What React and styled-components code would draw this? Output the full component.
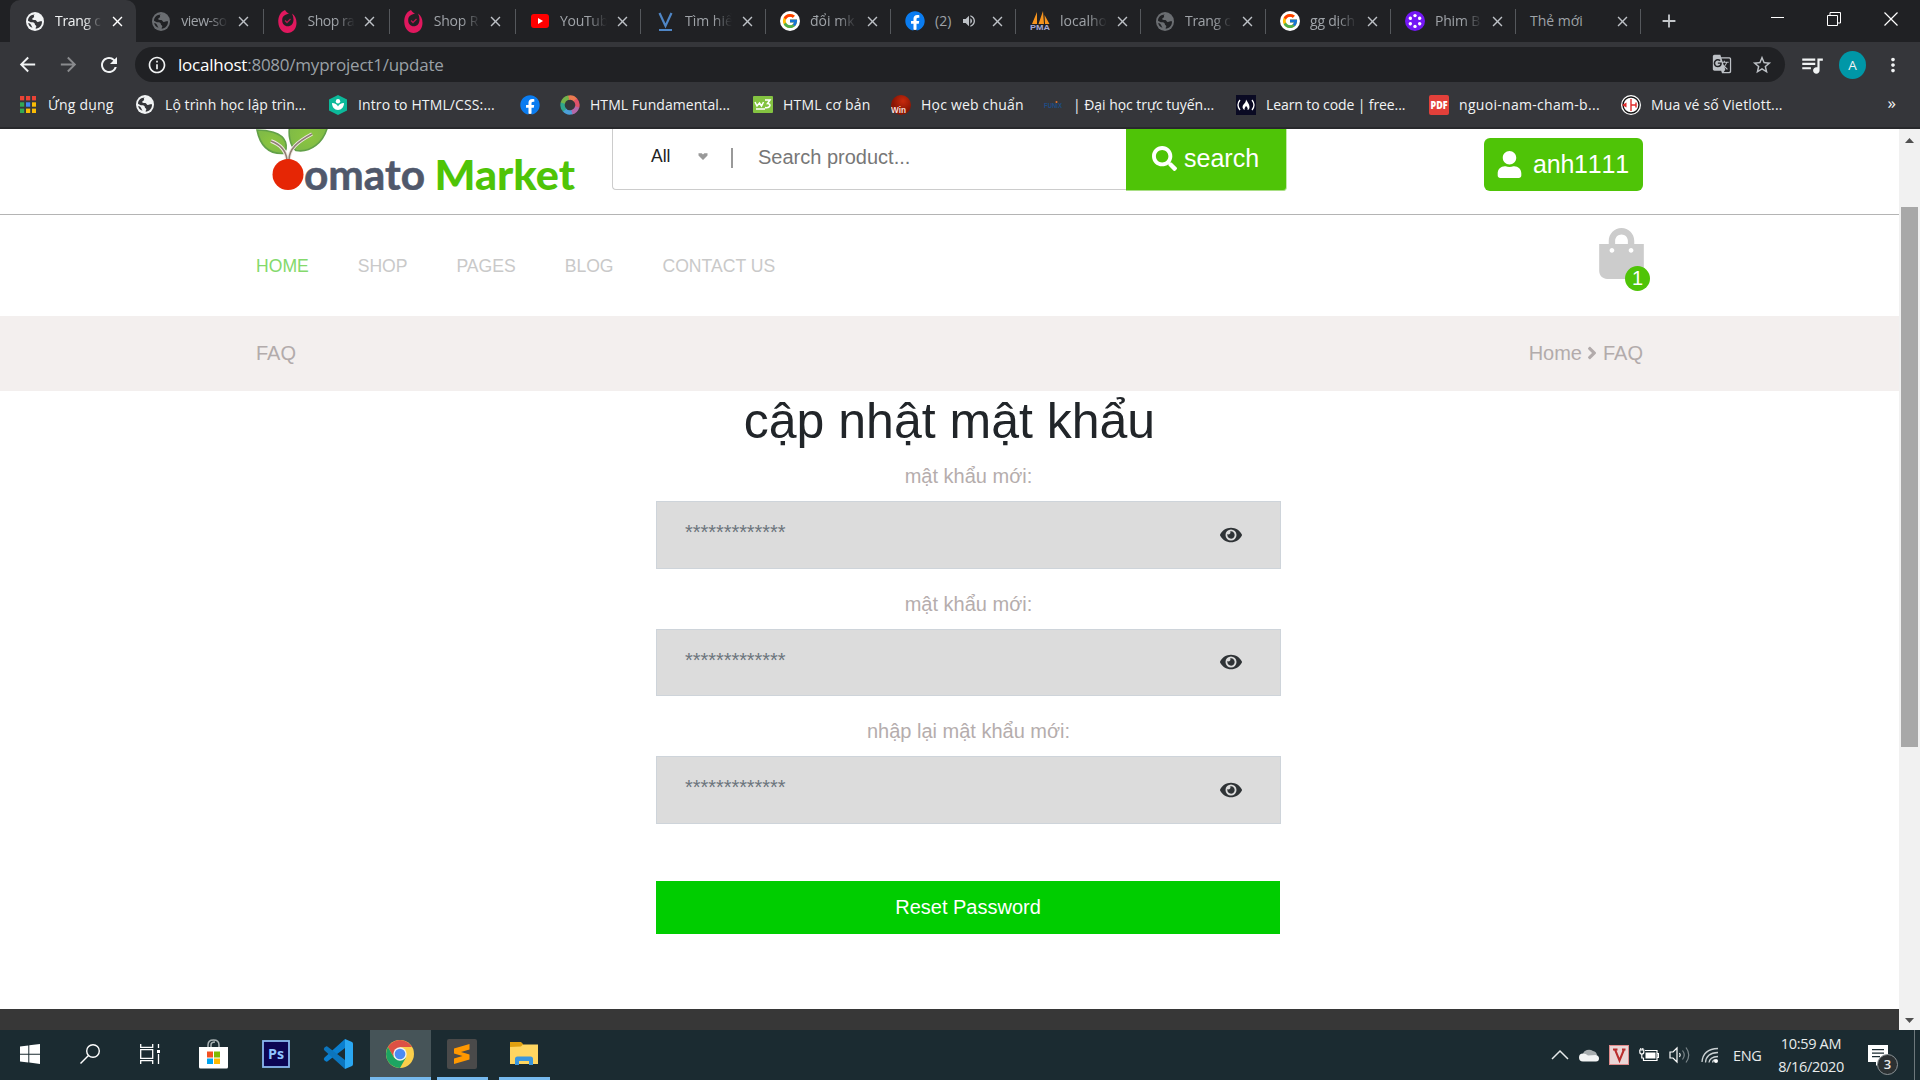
import React from "react";
import styled, { createGlobalStyle, css } from "styled-components";
import { FaEye, FaSearch, FaUser, FaShoppingBag, FaAngleRight, FaFacebook } from "react-icons/fa";
import { FcGoogle } from "react-icons/fc";
import {
  MdArrowBack, MdArrowForward, MdRefresh, MdInfoOutline, MdMoreVert,
  MdClose, MdAdd, MdVolumeUp, MdStarBorder, MdQueueMusic, MdGTranslate,
} from "react-icons/md";

const GlobalStyle = createGlobalStyle`
  *, *::before, *::after { box-sizing: border-box; }
  body { margin: 0; background: #fff; overflow: hidden; }
  svg { display: block; flex: none; }
`;

const ui = `"Open Sans", "Noto Sans", sans-serif`;
const web = `"Liberation Sans", Arial, sans-serif`;
const green = "#4fc407";

/* ---------- window ---------- */
const Desktop = styled.div`
  width: 1920px;
  height: 1080px;
  display: grid;
  grid-template-rows: 42px 45px 42px 901px 50px;
  font-family: ${ui};
  overflow: hidden;
`;

const TabStrip = styled.div`
  display: flex;
  background: #202124;
  padding-left: 10px;
`;
const Tab = styled.div`
  width: ${(p) => p.$w}px;
  height: 42px;
  display: flex;
  align-items: center;
  padding-left: 15px;
  position: relative;
  font-size: 14px;
  color: ${(p) => (p.$active ? "#f1f3f4" : "#9fa3a8")};
  background: ${(p) => (p.$active ? "#35363a" : "transparent")};
  border-radius: 10px 10px 0 0;
  ${(p) =>
    p.$line &&
    css`
      &::after {
        content: "";
        position: absolute;
        right: -1px;
        top: 9px;
        width: 1px;
        height: 25px;
        background: #55585c;
      }
    `}
`;
const TabIcon = styled.span`
  width: 20px;
  margin-right: 10px;
  display: flex;
  justify-content: center;
`;
const TabTitle = styled.span`
  width: ${(p) => (p.$wide ? 77 : 47)}px;
  white-space: nowrap;
  line-height: 24px;
  letter-spacing: ${(p) => p.$ls || 0}px;
  mask-image: ${(p) => (p.$wide || p.$short ? "none" : "linear-gradient(90deg, #000 60%, transparent 100%)")};
`;
const Speaker = styled.span`
  position: absolute;
  left: 71px;
  top: 13px;
  color: #bdc1c6;
`;
const TabClose = styled.span`
  margin-left: 6.5px;
  color: ${(p) => (p.$active ? "#fff" : "#bdc1c6")};
`;
const NewTab = styled.div`
  margin-left: 18px;
  display: flex;
  align-items: center;
  color: #c4c7ca;
`;
const WindowButtons = styled.div`
  margin-left: auto;
  display: flex;
  align-items: flex-start;
  padding: 12px 22px 0 0;
  gap: 43px;
`;

const Toolbar = styled.div`
  background: #35363a;
  display: flex;
  align-items: center;
  padding: 0 16px 0 16px;
  color: #f1f3f4;
`;
const NavButtons = styled.div`
  display: flex;
  gap: 17.5px;
  width: 119px;
`;
const NavIcon = styled.span`
  opacity: ${(p) => (p.$dim ? 0.45 : 1)};
`;
const Omnibox = styled.div`
  width: 1650px;
  height: 35px;
  border-radius: 18px;
  background: #202124;
  display: flex;
  align-items: center;
  padding: 0 12px;
  font-size: 17px;
  line-height: 35px;
`;
const Url = styled.span`
  margin-left: 11px;
  flex: 1;
  letter-spacing: -0.23px;
  color: #9aa0a6;
  b { color: #fff; font-weight: 400; }
`;
const OmniIcons = styled.div`
  display: flex;
  gap: 19px;
  color: #bdc1c6;
`;
const Actions = styled.div`
  display: flex;
  align-items: center;
  margin-left: 14px;
  flex: 1;
`;
const Avatar = styled.span`
  width: 27px;
  height: 28px;
  margin-left: 14px;
  margin-right: auto;
  border-radius: 50%;
  background: #0097a7;
  font-size: 13.5px;
  line-height: 28px;
  text-align: center;
`;

const Bookmarks = styled.div`
  background: #35363a;
  border-bottom: 2px solid #28292c;
  display: flex;
  align-items: center;
  padding: 0 24px 5px 18px;
  color: #f1f3f4;
  font-size: 14px;
`;
const Bookmark = styled.div`
  display: flex;
  align-items: center;
  width: ${(p) => p.$w}px;
  flex: none;
`;
const BookmarkIcon = styled.span`
  width: 20px;
  display: flex;
  justify-content: center;
  margin-right: 10px;
`;
const BookmarkText = styled.span`
  white-space: nowrap;
  letter-spacing: ${(p) => p.$ls || 0}px;
`;
const More = styled.span`
  margin-left: auto;
  font-size: 17px;
  line-height: 18px;
  margin-top: -4px;
`;

/* ---------- web page ---------- */
const Viewport = styled.div`
  display: grid;
  grid-template-columns: 1899px 21px;
  font-family: ${web};
`;
const Page = styled.div`
  display: flex;
  flex-direction: column;
  background: #fff;
`;
const Header = styled.header`
  height: 86px;
  padding: 0 256px;
  border-bottom: 1px solid #b4b4b4;
  display: flex;
  align-items: flex-start;
  overflow: hidden;
`;
const LogoBox = styled.div`
  width: 356px;
  height: 61px;
`;
const SearchBox = styled.div`
  display: flex;
  width: 675px;
  height: 62px;
`;
const SearchFields = styled.div`
  display: flex;
  width: 514px;
  height: 61px;
  border: solid #ccc;
  border-width: 0 0 1px 1px;
  border-radius: 0 0 0 4px;
`;
const Category = styled.div`
  width: 120px;
  height: 54px;
  padding-left: 38px;
  display: flex;
  align-items: center;
  gap: 28px;
  font-size: 17.5px;
  color: #222;
`;
const Divider = styled.span`
  width: 2px;
  height: 20px;
  margin: 19px 0 0 -2px;
  background: #999;
`;
const SearchInput = styled.input`
  width: 380px;
  height: 60px;
  border: 0;
  outline: 0;
  background: transparent;
  padding: 0 0 3px 25px;
  font: 20px ${web};
  &::placeholder { color: #777; opacity: 1; }
`;
const SearchButton = styled.button`
  flex: 1;
  height: 62px;
  border: 0;
  border-right: 1px solid #c3e8ab;
  border-bottom: 1px solid #a9df85;
  border-radius: 0 0 4px 0;
  background: ${green};
  color: #fff;
  font: 25px ${web};
  display: flex;
  align-items: center;
  gap: 7px;
  padding: 0 0 3px 26px;
`;
const UserButton = styled.button`
  margin: 9px 0 0 auto;
  width: 159px;
  height: 53px;
  border: 0;
  border-radius: 6px;
  background: ${green};
  color: #fff;
  font: 25px ${web};
  font-kerning: none;
  letter-spacing: -0.2px;
  display: flex;
  align-items: center;
  gap: 10px;
  padding: 0 0 0 12px;
`;
const MenuBar = styled.nav`
  height: 101px;
  padding: 2px 249px 0 256px;
  display: flex;
  align-items: center;
  gap: 48.9px;
  font-size: 17.6px;
`;
const MenuLink = styled.a`
  color: ${(p) => (p.$active ? "#84d96c" : "#c9c9c9")};
`;
const Cart = styled.div`
  position: relative;
  margin-left: auto;
  align-self: flex-start;
  width: 54px;
  height: 76px;
  padding-top: 11px;
  color: #ccc;
`;
const CartCount = styled.span`
  position: absolute;
  right: 0;
  top: 49px;
  width: 25px;
  height: 25px;
  border-radius: 50%;
  background: ${green};
  color: #fff;
  font-size: 20px;
  line-height: 25px;
  text-align: center;
`;
const Breadcrumb = styled.div`
  height: 75px;
  background: #f3efee;
  padding: 0 256px 1px 256px;
  display: flex;
  align-items: center;
  justify-content: space-between;
  font-size: 20px;
  color: #b2abab;
`;
const Trail = styled.div`
  display: flex;
  align-items: center;
  gap: 5.5px;
`;
const TrailArrow = styled(FaAngleRight)`
  width: 10px;
`;
const Heading = styled.h1`
  margin: 0 0 10px;
  font-size: 50px;
  font-weight: 400;
  line-height: 60px;
  text-align: center;
  color: #212529;
`;
const Form = styled.form`
  width: 625px;
  margin-left: 656px;
  flex: 1;
`;
const Field = styled.div`
  margin-bottom: 20px;
`;
const Label = styled.label`
  display: block;
  margin-bottom: 10px;
  font-size: 20px;
  line-height: 30px;
  text-align: center;
  color: #b5adad;
`;
const InputFrame = styled.div`
  height: 67.5px;
  border: 1px solid #ced4da;
  background: #dcdcdc;
  display: flex;
  align-items: center;
  padding: 0 38px 0 28px;
  color: #2f3336;
`;
const PasswordInput = styled.input`
  flex: 1;
  border: 0;
  outline: 0;
  padding: 0;
  margin-bottom: 4px;
  background: transparent;
  font: 20px ${web};
  letter-spacing: -0.05px;
  &::placeholder { color: #6c757d; opacity: 1; }
`;
const Submit = styled.button`
  display: block;
  width: 624px;
  height: 53px;
  margin-top: 57px;
  border: 0;
  background: #00cd00;
  color: #fff;
  font: 20px ${web};
`;
const Footer = styled.footer`
  height: 21px;
  background: #373737;
`;
const Scrollbar = styled.div`
  background: #f1f1f1;
  display: flex;
  flex-direction: column;
  align-items: center;
  padding: 9px 0 7px;
`;
const Thumb = styled.div`
  width: 17px;
  height: 540px;
  margin: 64px 0 auto;
  background: #a8a8a8;
`;

/* ---------- taskbar ---------- */
const Taskbar = styled.div`
  display: flex;
  background: #1b2b31;
  color: #e8ebec;
`;
const TaskButton = styled.div`
  width: ${(p) => p.$w}px;
  margin-right: ${(p) => p.$mr || 0}px;
  height: 50px;
  display: flex;
  align-items: center;
  justify-content: center;
  padding: ${(p) => (p.$open ? "1px 2px 0 0" : "1px 0 0")};
  background: ${(p) => (p.$active ? "#465458" : "transparent")};
  border-bottom: 3px solid ${(p) => (p.$open ? "#76b9ed" : "transparent")};
`;
const Tray = styled.div`
  margin-left: auto;
  display: flex;
  align-items: center;
  padding-right: 5px;
`;
const TrayIcons = styled.div`
  display: flex;
  align-items: center;
  gap: 10px;
`;
const Lang = styled.span`
  font-size: 14.5px;
  margin-left: 14px;
  width: 43px;
  letter-spacing: -0.3px;
`;
const Clock = styled.div`
  width: 70px;
  padding-bottom: 1px;
  font-size: 14.5px;
  line-height: 23px;
  text-align: center;
  white-space: nowrap;
  letter-spacing: -0.33px;
`;
const Notices = styled.div`
  position: relative;
  width: 32px;
  height: 50px;
  margin-left: 22px;
  padding-top: 15px;
`;
const NoticeCount = styled.span`
  position: absolute;
  left: 9px;
  top: 24px;
  width: 21px;
  height: 21px;
  border-radius: 50%;
  border: 1px solid #8c9396;
  background: #2b3032;
  font-size: 13px;
  font-weight: 600;
  line-height: 19px;
  text-align: center;
`;
const Peek = styled.span`
  width: 1px;
  height: 50px;
  margin-left: 14px;
  background: #6d777b;
`;

/* ---------- drawings ---------- */
const Globe = ({ color = "#f1f3f4", sea = "#35363a" }) => (
  <svg width="18" height="19" viewBox="0 0 18 19">
    <ellipse cx="9" cy="9.500" rx="9" ry="9.400" fill={color} />
    <path d="M9 2.500c-1 .3-1.400 1-1 1.800.5.900-.3 1.300-1 1.600-.8.400-1 1-.6 1.600.6.700 2 .2 3 .6 1.300.5 1 1.600 2.200 1.800 1.500.2 2.300-.9 4.400-.6.300 4.200-3 7.300-6.200 7.500-.6-1 .6-1.400.5-2.500-.1-1-1.500-1-1.500-2.200 0-1.500-1.300-1.700-2.800-1.800-1.600 0-2.900-.6-4-1.500C2 5.200 5.200 2.300 9 2.500z" fill={sea} />
    <path d="M2.200 11c1.500.4 2.600 1 3 2.200.3 1 .8 1.500 1.300 2.500C4 15 2.500 13.200 2.200 11z" fill={sea} />
  </svg>
);
const Swirl = () => (
  <svg width="19" height="23" viewBox="0 0 19 23">
    <path d="M7 0C2 2 0 7 .3 12.500.7 18.500 4.500 23 9.500 23c5.200 0 9-4.200 9-10 0-4-1.500-7.500-4.500-9.500 1 2 1.500 4 1.500 6 0 4-2.200 6.800-5.800 6.800-3.300 0-5.500-2.400-5.500-6C4.200 6 7 4.500 11 3.500 9.500 3 8 2 7 0z" fill="#e0185e" />
    <path d="M7 10.500l2 2 3.500-3.500" stroke="#b8164e" strokeWidth="1.300" fill="none" />
  </svg>
);
const YouTube = () => (
  <svg width="18" height="14" viewBox="0 0 18 14">
    <rect width="18" height="14" rx="3" fill="#f00" />
    <path d="M7 4l5 3-5 3z" fill="#fff" />
  </svg>
);
const VMark = () => (
  <svg width="15" height="19" viewBox="0 0 15 19">
    <path d="M1.500 1l6 13 6-13" stroke="#4f86c6" strokeWidth="2.200" fill="none" />
    <path d="M1 18h13" stroke="#4f86c6" strokeWidth="2" />
  </svg>
);
const GoogleMark = () => (
  <svg width="20" height="20" viewBox="0 0 20 20">
    <circle cx="10" cy="10" r="10" fill="#fff" />
    <g transform="translate(1.5 1.5)"><FcGoogle size={17} /></g>
  </svg>
);
const Facebook = () => (
  <svg width="20" height="20" viewBox="0 0 20 20">
    <circle cx="10" cy="10" r="9" fill="#fff" />
    <FaFacebook size={20} color="#0a7cf0" />
  </svg>
);
const Sails = () => (
  <svg width="20" height="20" viewBox="0 0 20 20">
    <path d="M7 1v12H2zM13 0L8.500 13H14zM14.500 4l5 9h-4.500z" fill="#f7941d" />
    <text x="0" y="19" fontSize="8" fontWeight="700" fill="#a6a9d4" fontFamily="Liberation Sans, sans-serif" textLength="20" lengthAdjust="spacingAndGlyphs">PMA</text>
  </svg>
);
const Dots = () => (
  <svg width="20" height="20" viewBox="0 0 20 20">
    <circle cx="10" cy="10" r="10" fill="#7417f5" />
    {[0, 60, 120, 180, 240, 300].map((a) => (
      <circle key={a} cx="10" cy="4.6" r="1.7" fill="#fff" transform={`rotate(${a} 10 10)`} />
    ))}
  </svg>
);
const AppsGrid = () => (
  <svg width="16" height="17" viewBox="0 0 16 17">
    {["#ea4335", "#ea4335", "#ea4335", "#34a853", "#4285f4", "#fbbc05", "#34a853", "#fbbc05", "#fbbc05"].map((c, i) => (
      <rect key={i} x={(i % 3) * 6} y={Math.floor(i / 3) * 6.3} width="4.200" height="4.400" fill={c} />
    ))}
  </svg>
);
const Sprout = () => (
  <svg width="18" height="20" viewBox="0 0 18 20">
    <path d="M9 0l9 4.500v11L9 20l-9-4.500v-11z" fill="#0cb99a" />
    <circle cx="9" cy="6.200" r="2.200" fill="#fff" />
    <path d="M3 8c3 0 5 1.500 6 3.500C10 9.500 12 8 15 8c0 4-2.500 7-6 7S3 12 3 8z" fill="#fff" />
  </svg>
);
const Ring = () => (
  <svg width="20" height="20" viewBox="0 0 20 20" fill="none" strokeWidth="4.400">
    {["#ea7a50", "#e0526a", "#b368a8", "#4c9fd8", "#2fa58c", "#74b24a"].map((c, i) => (
      <path key={c} d="M10 2.600a7.400 7.400 0 0 1 6.700 4.200" stroke={c} transform={`rotate(${i * 60 - 15} 10 10)`} />
    ))}
  </svg>
);
const W3 = () => (
  <svg width="20" height="17" viewBox="0 0 20 17">
    <rect width="20" height="17" rx="1" fill="#84c341" />
    <path d="M2 6l2 4 2.500-3 2 3 2-4M12 4h5l-2.500 3.500c4 0 3 5-2.500 4M3 13h9" stroke="#fff" strokeWidth="1.500" fill="none" />
  </svg>
);
const Win = () => (
  <svg width="20" height="20" viewBox="0 0 20 20">
    <defs><radialGradient id="winRed" cx=".6" cy=".3"><stop offset="0" stopColor="#c82a0c" /><stop offset="1" stopColor="#8a1504" /></radialGradient></defs>
    <circle cx="10" cy="10" r="10" fill="url(#winRed)" />
    <text x="0" y="17.500" fontSize="9" fontWeight="700" fill="#f4dcd6" fontFamily="Liberation Sans, sans-serif" textLength="15" lengthAdjust="spacingAndGlyphs">Win</text>
  </svg>
);
const Funix = () => (
  <svg width="20" height="10" viewBox="0 0 20 10">
    <text x="1" y="8" fontSize="7" fontWeight="700" fill="#1d4d86" fontFamily="Liberation Sans, sans-serif" textLength="18" lengthAdjust="spacingAndGlyphs">FUNiX</text>
    <circle cx="13.500" cy="2" r="1" fill="#e8762c" />
  </svg>
);
const Camp = () => (
  <svg width="20" height="20" viewBox="0 0 20 20">
    <rect width="20" height="20" fill="#0a0a23" />
    <path d="M4 5q-4 5 0 10M16 5q4 5 0 10" stroke="#fff" strokeWidth="1.300" fill="none" />
    <path d="M10 4.500c1 2 3.500 4.500 3.500 7.500 0 2-1 3-2 3 .8-2-.5-3-1.500-4-.8 1.500-2 2.500-1.300 4C6 13.500 6 11 8 9c1.300-1.300 2-2.500 2-4.500z" fill="#fff" />
  </svg>
);
const Pdf = () => (
  <svg width="20" height="20" viewBox="0 0 20 20">
    <rect width="20" height="20" rx="2" fill="#e2403a" />
    <text x="1.500" y="13.800" fontSize="10" fontWeight="800" fill="#fff" fontFamily="Open Sans, sans-serif" textLength="17" lengthAdjust="spacingAndGlyphs">PDF</text>
  </svg>
);
const Lott = () => (
  <svg width="20" height="20" viewBox="0 0 20 20">
    <circle cx="10" cy="10" r="10" fill="#fff" />
    <circle cx="10" cy="10" r="8" fill="none" stroke="#151515" strokeWidth="1.400" />
    <path d="M10 4v12M10 10h5.500M15 7.500v5" stroke="#e02a2a" strokeWidth="1.400" fill="none" />
    <path d="M1 10l4.500-2.500v5z" fill="#e02a2a" />
  </svg>
);

const Logo = () => (
  <svg width="330" height="61" viewBox="0 0 330 61">
    <defs>
      <radialGradient id="leaf"><stop offset="0" stopColor="#8cc63f" /><stop offset="1" stopColor="#80bb46" /></radialGradient>
    </defs>
    <path d="M1 1C10 1 26 3 29.500 13c1.500 5 .5 9-2 11.500C17 25 5 21 1 1z" fill="url(#leaf)" stroke="#62a048" strokeWidth="1.600" />
    <path d="M35 -8C31 4 34 17 40 21.500 54 24 68 14 72-4z" fill="url(#leaf)" stroke="#62a048" strokeWidth="1.600" />
    <path d="M15 12c8 3 15 9 16 19M33 31c0-11 8-18 23-26" fill="none" stroke="#efe9e2" strokeWidth="3.600" />
    <path d="M15 12c8 3 15 9 16 19M33 31c0-11 8-18 23-26" fill="none" stroke="#8f7e74" strokeWidth="1.500" />
    <ellipse cx="32" cy="45.500" rx="15.500" ry="15.500" fill="#e62605" />
    <text x="48" y="60.800" fontFamily="Lato, sans-serif" fontWeight="700" fontSize="42" fill="#50586b" stroke="#50586b" strokeWidth=".6" textLength="121" lengthAdjust="spacingAndGlyphs">omato</text>
    <text x="178.500" y="60.500" fontFamily="Lato, sans-serif" fontWeight="900" fontSize="42.500" fill={green} textLength="140.500" lengthAdjust="spacingAndGlyphs">Market</text>
  </svg>
);
const Caret = () => (
  <svg width="10" height="8" viewBox="0 0 10 8"><path d="M.5 1.200h3.200L5 2.500l1.300-1.300h3.200v2.300L5 8 .5 3.500z" fill="#999" /></svg>
);

const WindowsMark = () => (
  <svg width="20" height="20" viewBox="0 0 20 20" fill="#fff">
    <path d="M0 2.600l8.300-1.100v8.200H0zM9.300 1.300L20 0v9.700H9.300zM0 10.700h8.300v7.800L0 17.400zM9.300 10.700H20V20L9.300 18.600z" />
  </svg>
);
const Lens = () => (
  <svg width="20" height="20" viewBox="0 0 20 20" fill="none" stroke="#fff" strokeWidth="1.400">
    <circle cx="13" cy="7" r="6.300" /><path d="M8.500 11.500L.5 19.500" />
  </svg>
);
const TaskView = () => (
  <svg width="20" height="20" viewBox="0 0 20 20" fill="none" stroke="#fff" strokeWidth="1.300">
    <path d="M.7 0v3.300h12V0M.7 20v-3.300h12V20M.7 5.700h12v8.600H.7zM18.500 0v4M18.500 10v10" /><path d="M17 6h3v3h-3z" fill="#fff" stroke="none" />
  </svg>
);
const Store = () => (
  <svg width="29" height="30" viewBox="0 0 29 30">
    <path d="M9 9V6q0-5 5.500-5T20 6v3M12 9V6q0-3 4-3" fill="none" stroke="#aab2b4" strokeWidth="1.500" />
    <path d="M0 8h29v20q0 1.500-1.500 1.500h-26Q0 29.500 0 28z" fill="#fff" />
    <path d="M8 12.500h6v6H8z" fill="#f25022" /><path d="M15 12.500h6v6h-6z" fill="#7fba00" />
    <path d="M8 19.500h6v5.500H8z" fill="#00a4ef" /><path d="M15 19.500h6v5.500h-6z" fill="#ffb900" />
  </svg>
);
const Photoshop = () => (
  <svg width="28" height="28" viewBox="0 0 28 28">
    <rect x="1" y="1" width="26" height="26" fill="#0c0553" stroke="#8ab8f0" strokeWidth="1.800" />
    <text x="14" y="19" textAnchor="middle" fontFamily="Open Sans, sans-serif" fontWeight="700" fontSize="15" fill="#8fc4ff" textLength="16" lengthAdjust="spacingAndGlyphs">Ps</text>
  </svg>
);
const Code = () => (
  <svg width="30" height="30" viewBox="0 0 30 30">
    <path d="M22 0L1.500 18.500q-1.500 1.500 0 3l1.500 1Q4 23 5 22L22 9z" fill="#0a7fd0" />
    <path d="M22 30L1.500 11.500q-1.500-1.500 0-3l1.500-1Q4 7 5 8L22 21z" fill="#0c75bd" />
    <path d="M22 0l7 3q1 .5 1 2v20q0 1.500-1 2l-7 3z" fill="#2aa7f2" />
  </svg>
);
const Chrome = () => (
  <svg width="28" height="28" viewBox="0 0 28 28">
    <circle cx="14" cy="14" r="14" fill="#fbcf4b" />
    <path d="M1.900 7A14 14 0 0 1 26.100 7H14L8 17.500z" fill="#dd5144" />
    <path d="M1.900 7A14 14 0 0 0 14 28l6-10.500H8z" fill="#1da462" />
    <circle cx="14" cy="14" r="6.700" fill="#f1f1f1" /><circle cx="14" cy="14" r="5.300" fill="#4c8bf5" />
  </svg>
);
const Sublime = () => (
  <svg width="30" height="30" viewBox="0 0 30 30">
    <rect width="30" height="30" rx="2" fill="#4a4a4a" />
    <path d="M7 9.500L22.500 5v5.500L14 13l8.500 2.500v5L7 25v-5.500L15.500 17 7 14.500z" fill="#ff9800" />
  </svg>
);
const Folder = () => (
  <svg width="28" height="24" viewBox="0 0 28 24">
    <path d="M0 0h11l2 2v3H0z" fill="#e0a010" /><path d="M0 5l11-.5L13 2.500h15V22H0z" fill="#ffd560" />
    <path d="M5 23v-6q0-2.500 2.500-2.500h13q2.500 0 2.500 2.500v6h-4v-4H9v4z" fill="#3a96dd" />
  </svg>
);
const UpArrow = () => (
  <svg width="18" height="20" viewBox="0 0 18 20"><path d="M1 14l8-8 8 8" fill="none" stroke="#e8ebec" strokeWidth="1.500" /></svg>
);
const Cloud = () => (
  <svg width="20" height="20" viewBox="0 0 20 20">
    <path d="M4 9a6 5 0 0 1 10-3 5 5 0 0 1 4 4L8 14z" fill="#a7adaf" /><path d="M4 16.500a4 4 0 0 1 0-8q3 0 5 2l8-.5q3 .5 3 3.500a3 3 0 0 1-3 3z" fill="#f2f4f4" />
  </svg>
);
const VKey = () => (
  <svg width="20" height="20" viewBox="0 0 20 20">
    <rect x=".5" y=".5" width="19" height="19" fill="#ead6d6" stroke="#e08a8a" />
    <path d="M4 4.500h4.500M13 4.500h3.500M6 4.500l4.500 11L15 4.500" stroke="#b92d2d" strokeWidth="2" fill="none" />
  </svg>
);
const Battery = () => (
  <svg width="20" height="20" viewBox="0 0 20 20" fill="none" stroke="#fff" strokeWidth="1.200">
    <path d="M6 5.500h12v10H4.500V13M18.500 8.500h1v4h-1M.8 5v2q0 2 2 2t2-2V5zM1.800 3v2M3.800 3v2M2.800 9v4h2" /><path d="M6.500 7.500h10v6h-10z" fill="#fff" stroke="none" />
  </svg>
);
const Volume = () => (
  <svg width="22" height="20" viewBox="0 0 22 20" fill="none" stroke="#fff" strokeWidth="1.200">
    <path d="M1 7h3l4-4v14l-4-4H1zM10.500 8q1.500 2 0 4" /><path d="M13.500 5.500q3.500 4.500 0 9M17 2.500q5.500 7.500 0 15" stroke="#7b868a" />
  </svg>
);
const Wifi = () => (
  <svg width="18" height="20" viewBox="0 0 18 20" fill="none" stroke="#c9d0d2" strokeWidth="1.300">
    <path d="M1 17Q2 4 17 3.500M4.500 17.500Q5 8 17 7.500M8 17.500Q8.500 12 17 11.500M11.500 17.500Q12 15 14 15" /><circle cx="15" cy="16" r="2" fill="#fff" stroke="none" />
  </svg>
);
const Message = () => (
  <svg width="20" height="22" viewBox="0 0 20 22">
    <path d="M0 0h20v17H12l-4 4v-4H0z" fill="#fff" /><path d="M4 4.700h12M4 8.200h12M4 11.700h8" stroke="#1b2b31" strokeWidth="1.200" />
  </svg>
);

/* ---------- data ---------- */
const tabs = [
  { icon: <Globe />, title: "Trang c", active: true, ls: -0.3 },
  { icon: <Globe color="#6a6d71" sea="#202124" />, title: "view-so", line: true, ls: -0.5 },
  { icon: <Swirl />, title: "Shop ra", line: true, ls: -0.5 },
  { icon: <Swirl />, title: "Shop R", line: true, ls: -0.2 },
  { icon: <YouTube />, title: "YouTub", line: true, ls: -0.3 },
  { icon: <VMark />, title: "Tìm hiể", line: true },
  { icon: <GoogleMark />, title: "đổi mk", line: true },
  { icon: <Facebook />, title: "(2)", line: true, sound: true },
  { icon: <Sails />, title: "localho", line: true },
  { icon: <Globe color="#6a6d71" sea="#202124" />, title: "Trang c", line: true, ls: -0.3 },
  { icon: <GoogleMark />, title: "gg dịch", line: true, ls: -0.2 },
  { icon: <Dots />, title: "Phim B", line: true, ls: -0.2 },
  { title: "Thẻ mới", line: true },
];
const bookmarks = [
  { icon: <AppsGrid />, text: "Ứng dụng", w: 117, ls: 0.2 },
  { icon: <Globe />, text: "Lộ trình học lập trìn...", w: 193, ls: 0.08 },
  { icon: <Sprout />, text: "Intro to HTML/CSS:...", w: 192, ls: 0.12 },
  { icon: <Facebook />, w: 40 },
  { icon: <Ring />, text: "HTML Fundamental...", w: 193, ls: 0.05 },
  { icon: <W3 />, text: "HTML cơ bản", w: 138, ls: 0.2 },
  { icon: <Win />, text: "Học web chuẩn", w: 152, ls: 0.2 },
  { icon: <Funix />, text: "| Đại học trực tuyến...", w: 193, ls: -0.05 },
  { icon: <Camp />, text: "Learn to code | free...", w: 193, ls: -0.1 },
  { icon: <Pdf />, text: "nguoi-nam-cham-b...", w: 192, ls: 0.3 },
  { icon: <Lott />, text: "Mua vé số Vietlott...", w: 170, ls: 0.2 },
];
const menu = ["HOME", "SHOP", "PAGES", "BLOG", "CONTACT US"];
const fields = ["mật khẩu mới:", "mật khẩu mới:", "nhập lại mật khẩu mới:"];

export default function App() {
  return (
    <>
      <GlobalStyle />
      <Desktop>
        <TabStrip>
          {tabs.map((t, i) => (
            <Tab key={i} $w={i < 4 ? 126.25 : 125} $active={t.active} $line={t.line}>
              {t.icon && <TabIcon>{t.icon}</TabIcon>}
              <TabTitle $wide={!t.icon} $short={t.sound} $ls={t.ls}>{t.title}</TabTitle>
              {t.sound && <Speaker><MdVolumeUp size={16} /></Speaker>}
              <TabClose $active={t.active}><MdClose size={17} /></TabClose>
            </Tab>
          ))}
          <NewTab><MdAdd size={22} /></NewTab>
          <WindowButtons>
            <svg width="13" height="14" viewBox="0 0 13 14"><path d="M0 5.500h13" stroke="#fff" /></svg>
            <svg width="14" height="14" viewBox="0 0 14 14" fill="none" stroke="#fff"><path d="M.5 3.500h10v10H.5zM3 3V.5h10.500V11H11" /></svg>
            <svg width="14" height="14" viewBox="0 0 14 14"><path d="M.5.5l13 13M13.500.5l-13 13" stroke="#fff" strokeWidth="1.200" /></svg>
          </WindowButtons>
        </TabStrip>

        <Toolbar>
          <NavButtons>
            <NavIcon><MdArrowBack size={23} /></NavIcon>
            <NavIcon $dim><MdArrowForward size={23} /></NavIcon>
            <NavIcon><MdRefresh size={24} /></NavIcon>
          </NavButtons>
          <Omnibox>
            <MdInfoOutline size={20} />
            <Url><b>localhost</b>:8080/myproject1/update</Url>
            <OmniIcons><MdGTranslate size={20} /><MdStarBorder size={22} /></OmniIcons>
          </Omnibox>
          <Actions>
            <MdQueueMusic size={26} />
            <Avatar>A</Avatar>
            <MdMoreVert size={22} />
          </Actions>
        </Toolbar>

        <Bookmarks>
          {bookmarks.map((b, i) => (
            <Bookmark key={i} $w={b.w}>
              <BookmarkIcon>{b.icon}</BookmarkIcon>
              {b.text && <BookmarkText $ls={b.ls}>{b.text}</BookmarkText>}
            </Bookmark>
          ))}
          <More>»</More>
        </Bookmarks>

        <Viewport>
          <Page>
            <Header>
              <LogoBox><Logo /></LogoBox>
              <SearchBox>
                <SearchFields>
                  <Category>All<Caret /></Category>
                  <Divider />
                  <SearchInput placeholder="Search product..." />
                </SearchFields>
                <SearchButton type="button"><FaSearch size={25} />search</SearchButton>
              </SearchBox>
              <UserButton type="button"><FaUser size={27} />anh1111</UserButton>
            </Header>
            <MenuBar>
              {menu.map((m, i) => <MenuLink key={m} $active={i === 0}>{m}</MenuLink>)}
              <Cart><FaShoppingBag size={51} /><CartCount>1</CartCount></Cart>
            </MenuBar>
            <Breadcrumb>
              <span>FAQ</span>
              <Trail><span>Home</span><TrailArrow size={20} /><span>FAQ</span></Trail>
            </Breadcrumb>
            <Heading>cập nhật mật khẩu</Heading>
            <Form>
              {fields.map((f, i) => (
                <Field key={i}>
                  <Label>{f}</Label>
                  <InputFrame>
                    <PasswordInput placeholder="*************" />
                    <FaEye size={22} />
                  </InputFrame>
                </Field>
              ))}
              <Submit type="button">Reset Password</Submit>
            </Form>
            <Footer />
          </Page>
          <Scrollbar>
            <svg width="9" height="5" viewBox="0 0 9 5"><path d="M0 5L4.500 0 9 5z" fill="#505050" /></svg>
            <Thumb />
            <svg width="9" height="5" viewBox="0 0 9 5"><path d="M0 0l4.500 5L9 0z" fill="#505050" /></svg>
          </Scrollbar>
        </Viewport>

        <Taskbar>
          <TaskButton $w={60}><WindowsMark /></TaskButton>
          <TaskButton $w={60}><Lens /></TaskButton>
          <TaskButton $w={60}><TaskView /></TaskButton>
          <TaskButton $w={66}><Store /></TaskButton>
          <TaskButton $w={60}><Photoshop /></TaskButton>
          <TaskButton $w={64}><Code /></TaskButton>
          <TaskButton $w={61} $mr={6} $active $open><Chrome /></TaskButton>
          <TaskButton $w={51} $mr={11} $open><Sublime /></TaskButton>
          <TaskButton $w={51} $open><Folder /></TaskButton>
          <Tray>
            <TrayIcons><UpArrow /><Cloud /><VKey /><Battery /><Volume /><Wifi /></TrayIcons>
            <Lang>ENG</Lang>
            <Clock>10:59 AM<br />8/16/2020</Clock>
            <Notices><Message /><NoticeCount>3</NoticeCount></Notices>
            <Peek />
          </Tray>
        </Taskbar>
      </Desktop>
    </>
  );
}
